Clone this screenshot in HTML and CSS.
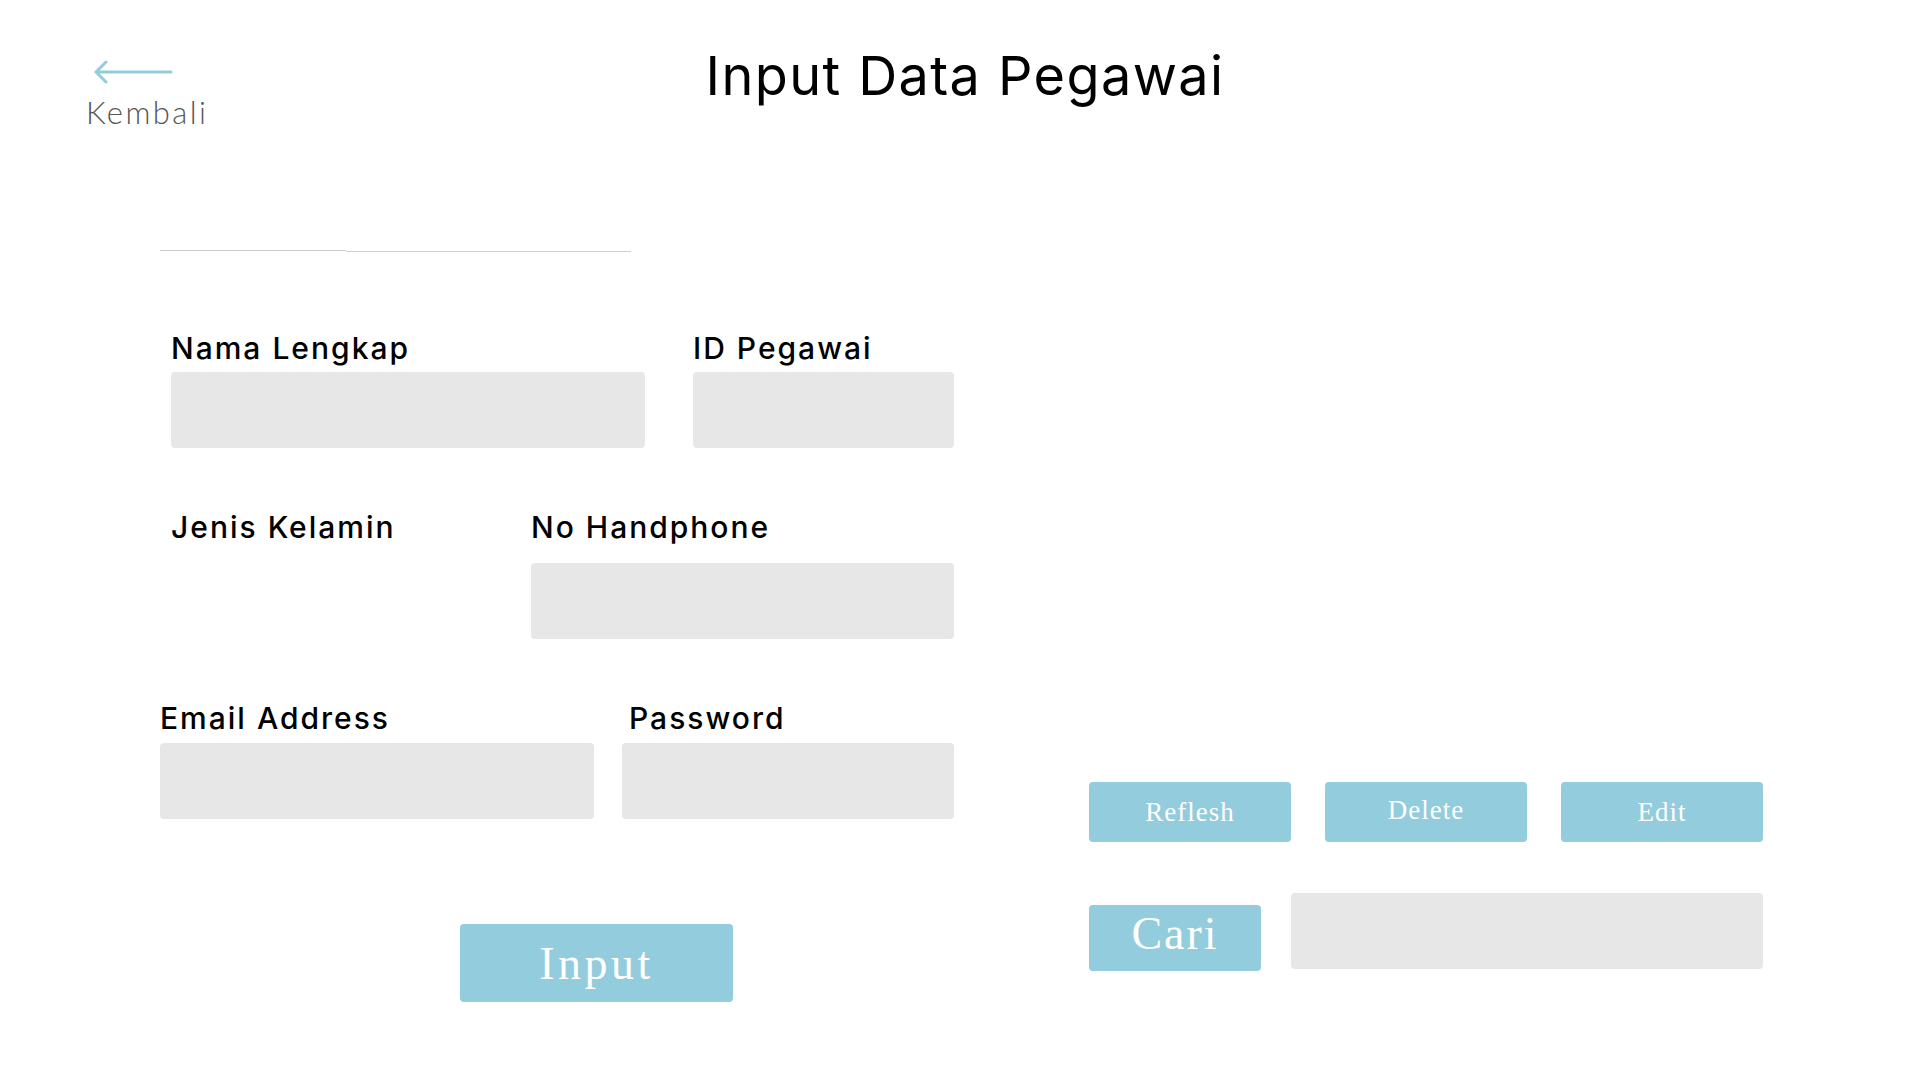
FILE: index.html
```html
<!DOCTYPE html>
<html lang="id">
<head>
<meta charset="utf-8">
<title>Input Data Pegawai</title>
<link rel="stylesheet" href="styles.css">
</head>
<body>
<div class="page">
  <header class="header">
    <a class="back" href="#">
      <svg class="back-icon" width="80" height="24" viewBox="0 0 80 24" fill="none">
        <path d="M3 12 H78 M13 2 L3 12 L13 22" stroke="#93cddd" stroke-width="3" stroke-linecap="round" stroke-linejoin="round"/>
      </svg>
      <span class="back-text">Kembali</span>
    </a>
    <h1 class="title">Input Data Pegawai</h1>
    <div class="spacer"></div>
  </header>

  <main class="main">
    <section class="form">
      <div class="tabline"><span class="seg seg-a"></span><span class="seg seg-b"></span></div>

      <div class="row row-1">
        <div class="field f-nama"><label class="label">Nama Lengkap</label><input class="box" type="text"></div>
        <div class="field f-id"><label class="label">ID Pegawai</label><input class="box" type="text"></div>
      </div>

      <div class="row row-2">
        <div class="field f-jk"><label class="label">Jenis Kelamin</label></div>
        <div class="field f-hp"><label class="label">No Handphone</label><input class="box" type="text"></div>
      </div>

      <div class="row row-3">
        <div class="field f-email"><label class="label">Email Address</label><input class="box" type="text"></div>
        <div class="field f-pass"><label class="label label-pass">Password</label><input class="box" type="password"></div>
      </div>

      <div class="submit-row">
        <button class="btn btn-input">Input</button>
      </div>
    </section>

    <aside class="side">
      <div class="actions">
        <button class="btn btn-sm">Reflesh</button>
        <button class="btn btn-sm btn-delete">Delete</button>
        <button class="btn btn-sm">Edit</button>
      </div>
      <div class="search">
        <button class="btn btn-cari">Cari</button>
        <input class="box search-box" type="text">
      </div>
    </aside>
  </main>
</div>
</body>
</html>
```

FILE: styles.css
```css
* { box-sizing: border-box; }
html, body { margin: 0; padding: 0; background: #ffffff; }
body { font-family: "Inter", "Liberation Sans", sans-serif; color: #000; }
.page { width: 1920px; height: 1080px; overflow: hidden; }

.header {
  display: grid;
  grid-template-columns: 1fr auto 1fr;
  align-items: start;
  height: 131px;
}
.back {
  display: flex;
  flex-direction: column;
  align-items: flex-start;
  padding-left: 86px;
  padding-top: 60px;
  text-decoration: none;
}
.back-icon { display: block; margin-left: 7px; }
.back-text {
  margin-top: 10px;
  font-family: "Lato", "Liberation Sans", sans-serif;
  font-weight: 300;
  font-size: 31px;
  line-height: 37px;
  letter-spacing: 2.4px;
  color: #555555;
}
.title {
  margin: 44px 0 0 0;
  padding-left: 10px;
  font-family: "Inter", "Liberation Sans", sans-serif;
  font-weight: 400;
  font-size: 54px;
  line-height: 64px;
  letter-spacing: 1.4px;
  color: #000;
}

.main {
  display: flex;
  align-items: flex-end;
  padding-left: 160px;
  padding-top: 119px;
}
.form { width: 794px; display: flex; flex-direction: column; }
.tabline { display: flex; height: 2px; }
.seg { display: block; height: 1px; background: #cfcfcf; }
.seg-a { width: 186px; }
.seg-b { width: 285px; margin-top: 1px; }

.row { display: flex; justify-content: space-between; }
.row-1 { margin-top: 78px; padding-left: 11px; }
.row-2 { margin-top: 61px; padding-left: 11px; }
.row-3 { margin-top: 61px; }

.field { display: flex; flex-direction: column; }
.label {
  font-family: "Inter", "Liberation Sans", sans-serif;
  font-weight: 500;
  font-size: 30px;
  line-height: 36px;
  letter-spacing: 2px;
  color: #000;
  white-space: nowrap;
}
.box {
  display: block;
  height: 76px;
  border: none;
  outline: none;
  border-radius: 4px;
  background: #e7e7e7;
  padding: 0 16px;
  font-size: 24px;
}
.f-nama { width: 474px; }
.f-nama .box, .f-id .box { margin-top: 6px; }
.f-id { width: 261px; }
.f-jk { width: 300px; }
.f-hp { width: 423px; }
.f-hp .box { margin-top: 18px; }
.f-email { width: 434px; }
.f-pass { width: 332px; }
.f-email .box, .f-pass .box { margin-top: 7px; }
.label-pass { padding-left: 7px; }

.submit-row { margin-top: 105px; padding-left: 300px; }

.btn {
  border: none;
  border-radius: 4px;
  background: #93ccdc;
  color: #ffffff;
  font-family: "Liberation Serif", "Times New Roman", serif;
  padding: 0;
  cursor: pointer;
  display: flex;
  align-items: center;
  justify-content: center;
}
.btn-input {
  width: 273px;
  height: 78px;
  font-size: 46px;
  letter-spacing: 3.5px;
}

.side {
  width: 674px;
  margin-left: 135px;
  margin-bottom: 31px;
  display: flex;
  flex-direction: column;
}
.actions { display: flex; gap: 34px; }
.btn-sm {
  width: 202px;
  height: 60px;
  font-size: 27px;
  letter-spacing: 1px;
}
.btn-delete { padding-bottom: 3px; }
.search { display: flex; gap: 30px; align-items: flex-start; margin-top: 51px; }
.btn-cari {
  width: 172px;
  height: 66px;
  margin-top: 12px;
  font-size: 46px;
  letter-spacing: 2px;
  padding-bottom: 10px;
}
.search-box { width: 472px; }
```
